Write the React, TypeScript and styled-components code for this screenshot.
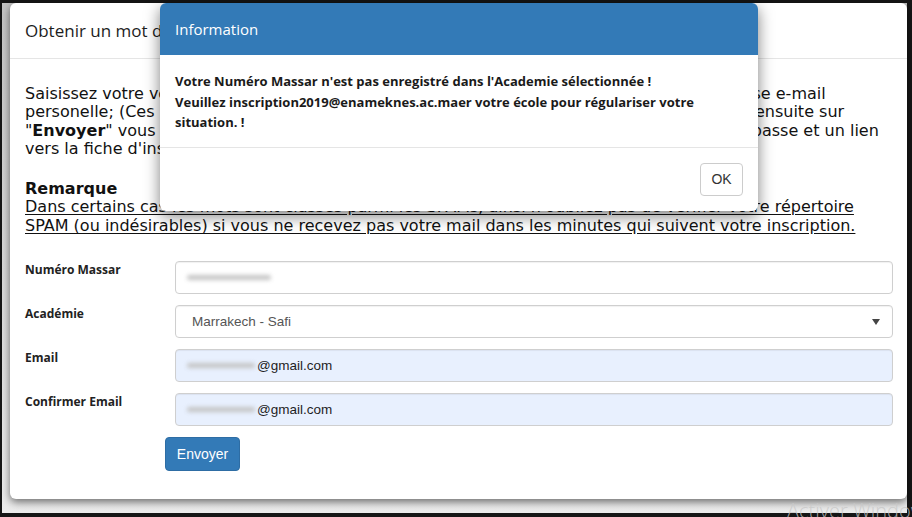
import React from "react";
import styled, { createGlobalStyle } from "styled-components";

const GlobalStyle = createGlobalStyle`
  html, body { margin: 0; padding: 0; }
  body {
    background: #161616;
    width: 912px;
    height: 517px;
    overflow: hidden;
  }
  * { box-sizing: border-box; }
`;

const Stage = styled.div`
  position: relative;
  margin: 3px 0 0 2px;
  width: 905px;
  height: 510px;
  padding-left: 8px;
  background: linear-gradient(#c4c4c4, #ececec);
`;

const Modal = styled.div`
  width: 897px;
  height: 496px;
  background: #fff;
  border-radius: 6px;
  box-shadow: 0 3px 9px rgba(0, 0, 0, 0.55);
  font-family: "Open Sans", sans-serif;
  color: #111;
  overflow: hidden;
`;

const ModalHeader = styled.div`
  height: 56px;
  padding: 0 15px;
  display: flex;
  align-items: center;
  border-bottom: 1px solid #e5e5e5;
`;

const ModalTitle = styled.h4`
  margin: 0;
  font-size: 17px;
  font-weight: 400;
  color: #1d1d1d;
`;

const ModalBody = styled.div`
  padding: 26px 14px 0 15px;
`;

const Prose = styled.div`
  font-family: "DejaVu Sans", sans-serif;
  font-size: 16px;
  line-height: 18.3px;
  color: #111;
`;

const Intro = styled.p`
  margin: 0;
  white-space: nowrap;
`;

const Note = styled.div`
  margin-top: 22px;
  white-space: nowrap;
`;

const NoteTitle = styled.div`
  font-weight: 700;
`;

const NoteText = styled.u`
  text-decoration: underline;
  text-underline-offset: 2px;
`;

const Form = styled.div`
  margin-top: 26px;
  display: grid;
  grid-template-columns: 150px 1fr;
  row-gap: 11px;
`;

const Label = styled.label`
  font-size: 12px;
  font-weight: 700;
  line-height: 16px;
  padding-top: 1px;
  color: #222;
`;

const Field = styled.div<{ $filled?: boolean; $select?: boolean }>`
  height: 33px;
  padding: 0 12px 0 ${(p) => (p.$select ? "16px" : "11px")};
  display: flex;
  align-items: center;
  justify-content: space-between;
  border: 1px solid #cfcfcf;
  border-radius: 4px;
  background: ${(p) => (p.$filled ? "#e8f0fe" : "#fff")};
  box-shadow: inset 0 1px 1px rgba(0, 0, 0, 0.06);
  font-family: "Liberation Sans", Arial, sans-serif;
  font-size: 13.5px;
  color: ${(p) => (p.$filled ? "#1e1e1e" : "#555")};
`;

const Value = styled.span`
  display: inline-flex;
  align-items: center;
`;

const Redacted = styled.span`
  display: inline-block;
  height: 5px;
  margin-right: 2px;
  border-radius: 3px;
  background: #c4c4c4;
  filter: blur(2.2px);
`;

const Actions = styled.div`
  margin-top: 11px;
  padding-left: 140px;
`;

const PrimaryButton = styled.button`
  width: 75px;
  height: 34px;
  border: 1px solid #2e6da4;
  border-radius: 4px;
  background: #337ab7;
  color: #fff;
  font-family: "Liberation Sans", Arial, sans-serif;
  font-size: 14px;
  padding: 0;
`;

const Dialog = styled.div`
  position: absolute;
  left: 158px;
  top: 0;
  width: 598px;
  background: #fff;
  border-radius: 6px;
  box-shadow: 0 5px 15px rgba(0, 0, 0, 0.5);
  font-family: "Open Sans", sans-serif;
`;

const DialogHeader = styled.div`
  height: 52px;
  padding: 0 15px 1px;
  display: flex;
  align-items: center;
  background: #337ab7;
  border-radius: 6px 6px 0 0;
  color: #fff;
  font-size: 15px;
`;

const DialogBody = styled.div`
  padding: 16px 15px 14px;
  font-size: 13px;
  font-weight: 700;
  line-height: 20.5px;
  color: #1a1a1a;
`;

const DialogFooter = styled.div`
  padding: 15px;
  display: flex;
  justify-content: flex-end;
  border-top: 1px solid #e5e5e5;
`;

const DefaultButton = styled.button`
  width: 43px;
  height: 33px;
  padding: 0;
  border: 1px solid #ccc;
  border-radius: 4px;
  background: #fff;
  color: #333;
  font-family: "Liberation Sans", Arial, sans-serif;
  font-size: 14px;
`;

const Watermark = styled.div`
  position: absolute;
  left: 785px;
  top: 498px;
  font-family: "Open Sans", sans-serif;
  font-weight: 300;
  font-size: 20px;
  line-height: 1;
  white-space: nowrap;
  color: rgba(200, 200, 200, 0.8);
`;

const Caret = () => (
  <svg width="8" height="6" viewBox="0 0 8 6">
    <path d="M0 0h8L4 6z" fill="#444" />
  </svg>
);

export default function App() {
  return (
    <>
      <GlobalStyle />
      <Stage>
        <Modal>
          <ModalHeader>
            <ModalTitle>Obtenir un mot de passe</ModalTitle>
          </ModalHeader>
          <ModalBody>
            <Prose>
              <Intro>
                Saisissez votre votre Numéro Massar, choisissez votre Académie puis saisissez votre adresse e-mail
                <br />
                personelle; (Ces informations sont nécessaires pour vous authentifier par la suite), cliquez ensuite sur
                <br />
                "<b>Envoyer</b>" vous recevrez rapidement sur votre adresse un e-mail contenant votre mot de passe et un lien
                <br />
                vers la fiche d'inscription.
              </Intro>
              <Note>
                <NoteTitle>Remarque</NoteTitle>
                <NoteText>
                  Dans certains cas les mots sont classés parmi les SPAMs, ainsi n'oubliez pas de vérifier votre répertoire
                  <br />
                  SPAM (ou indésirables) si vous ne recevez pas votre mail dans les minutes qui suivent votre inscription.
                </NoteText>
              </Note>
            </Prose>
            <Form>
              <Label>Numéro Massar</Label>
              <Field>
                <Value>
                  <Redacted style={{ width: 84 }} />
                </Value>
              </Field>
              <Label>Académie</Label>
              <Field $select>
                <Value>Marrakech - Safi</Value>
                <Caret />
              </Field>
              <Label>Email</Label>
              <Field $filled>
                <Value>
                  <Redacted style={{ width: 68 }} />
                  @gmail.com
                </Value>
              </Field>
              <Label>Confirmer Email</Label>
              <Field $filled>
                <Value>
                  <Redacted style={{ width: 68 }} />
                  @gmail.com
                </Value>
              </Field>
            </Form>
            <Actions>
              <PrimaryButton>Envoyer</PrimaryButton>
            </Actions>
          </ModalBody>
        </Modal>
        <Dialog>
          <DialogHeader>Information</DialogHeader>
          <DialogBody>
            Votre Numéro Massar n'est pas enregistré dans l'Academie sélectionnée !
            <br />
            Veuillez inscription2019@enameknes.ac.maer votre école pour régulariser votre
            <br />
            situation. !
          </DialogBody>
          <DialogFooter>
            <DefaultButton>OK</DefaultButton>
          </DialogFooter>
        </Dialog>
        <Watermark>Activer Windows</Watermark>
      </Stage>
    </>
  );
}
